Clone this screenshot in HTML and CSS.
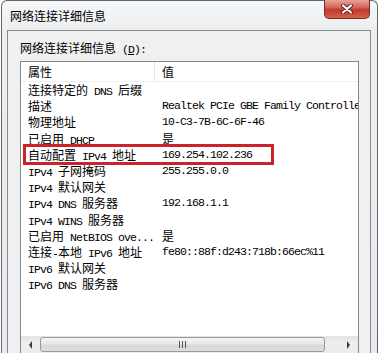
FILE: index.html
```html
<!DOCTYPE html>
<html lang="zh-CN">
<head>
<meta charset="utf-8">
<title>网络连接详细信息</title>
<link rel="stylesheet" href="styles.css">
</head>
<body>
<div class="window">
  <div class="titlebar">
    <span class="title">网络连接详细信息</span>
    <div class="close">
      <svg width="14" height="10" viewBox="0 0 14 10">
        <path d="M3 1.5 L11 8.5 M11 1.5 L3 8.5" stroke="#5a1d18" stroke-width="4" stroke-linecap="round"/>
        <path d="M3 1.5 L11 8.5 M11 1.5 L3 8.5" stroke="#ffffff" stroke-width="2.2" stroke-linecap="round"/>
      </svg>
    </div>
  </div>
  <div class="client">
    <div class="label">网络连接详细信息<span class="m"> (<u>D</u>):</span></div>
    <div class="listbox">
      <div class="header">
        <div class="hcell first">属性</div>
        <div class="hcell">值</div>
      </div>
      <div class="rows">
        <div class="row"><div class="c1">连接特定的<span class="m"> DNS </span>后缀</div><div class="c2"></div></div>
        <div class="row"><div class="c1">描述</div><div class="c2 m">Realtek PCIe GBE Family Controller</div></div>
        <div class="row"><div class="c1">物理地址</div><div class="c2 m">10-C3-7B-6C-6F-46</div></div>
        <div class="row"><div class="c1">已启用<span class="m"> DHCP</span></div><div class="c2">是</div></div>
        <div class="row hl"><div class="c1">自动配置<span class="m"> IPv4 </span>地址</div><div class="c2 m">169.254.102.236</div></div>
        <div class="row"><div class="c1"><span class="m">IPv4 </span>子网掩码</div><div class="c2 m">255.255.0.0</div></div>
        <div class="row"><div class="c1"><span class="m">IPv4 </span>默认网关</div><div class="c2"></div></div>
        <div class="row"><div class="c1"><span class="m">IPv4 DNS </span>服务器</div><div class="c2 m">192.168.1.1</div></div>
        <div class="row"><div class="c1"><span class="m">IPv4 WINS </span>服务器</div><div class="c2"></div></div>
        <div class="row"><div class="c1">已启用<span class="m"> NetBIOS ove...</span></div><div class="c2">是</div></div>
        <div class="row"><div class="c1">连接<span class="m">-</span>本地<span class="m"> IPv6 </span>地址</div><div class="c2 m">fe80::88f:d243:718b:66ec%11</div></div>
        <div class="row"><div class="c1"><span class="m">IPv6 </span>默认网关</div><div class="c2"></div></div>
        <div class="row"><div class="c1"><span class="m">IPv6 DNS </span>服务器</div><div class="c2"></div></div>
      </div>
      <div class="hscroll">
        <div class="sbtn"><span class="arrow-left"></span></div>
        <div class="thumb">
          <svg width="8" height="7" viewBox="0 0 8 7">
            <rect x="0" y="0" width="1" height="7" fill="#555"/>
            <rect x="3" y="0" width="1" height="7" fill="#555"/>
            <rect x="6" y="0" width="1" height="7" fill="#555"/>
          </svg>
        </div>
        <div class="track"></div>
        <div class="sbtn"><span class="arrow-right"></span></div>
      </div>
    </div>
  </div>
</div>
</body>
</html>
```

FILE: styles.css
```css
html, body {
  margin: 0;
  padding: 0;
}

body {
  width: 378px;
  height: 353px;
  overflow: hidden;
  background: #ffffff;
  font-family: "Noto Sans CJK SC", sans-serif;
  font-size: 12px;
  color: #000000;
}

.m {
  font-family: "Liberation Mono", monospace;
  font-size: 11.5px;
  letter-spacing: -0.9px;
}

.window {
  margin-left: 1px;
  width: 377px;
  height: 370px;
  box-sizing: border-box;
  border: 1px solid #5f666f;
  border-bottom: none;
  border-radius: 6px 6px 0 0;
  background: linear-gradient(#f6f7f8, #eceef0 30px, #e8eaed);
  display: flex;
  flex-direction: column;
}

.titlebar {
  flex: none;
  height: 29px;
  display: flex;
  align-items: center;
  padding: 0 7px 0 8px;
}

.title {
  line-height: 14px;
}

.close {
  margin-left: auto;
  align-self: flex-start;
  margin-top: -1px;
  width: 46px;
  height: 19px;
  box-sizing: border-box;
  border: 1px solid #7e2b23;
  border-top: none;
  border-radius: 0 0 5px 5px;
  background: linear-gradient(#e7a497, #d3665a 40%, #c2392c 55%, #d4614e);
  display: flex;
  align-items: center;
  justify-content: center;
}

.close svg {
  display: block;
}

.client {
  flex: 1;
  margin: 0 6px 0 5px;
  border: 1px solid #86898d;
  border-bottom: none;
  background: #f0f0f0;
  padding: 10px 11px 0 12px;
  display: flex;
  flex-direction: column;
}

.label {
  line-height: 14px;
  height: 14px;
  margin-bottom: 6px;
  white-space: nowrap;
}

.listbox {
  width: 339px;
  box-sizing: border-box;
  border: 1px solid #828790;
  background: #ffffff;
  overflow: hidden;
}

.header {
  display: grid;
  grid-template-columns: 134px 1fr;
  height: 19px;
  border-bottom: 1px solid #eceff3;
}

.hcell {
  line-height: 19px;
  padding-left: 7px;
}

.hcell.first {
  border-right: 1px solid #e3e5e8;
}

.rows {
  height: 254px;
  overflow: hidden;
}

.row {
  position: relative;
  display: grid;
  grid-template-columns: 134px 1fr;
  height: 16.2px;
  line-height: 16.2px;
  white-space: nowrap;
}

.c1, .c2 {
  padding-left: 7px;
  overflow: hidden;
}

.hl::after {
  content: "";
  position: absolute;
  left: 2px;
  top: -3px;
  width: 251px;
  height: 21px;
  box-sizing: border-box;
  border: 3px solid #cc2229;
}

.hscroll {
  height: 17px;
  display: flex;
  background: linear-gradient(#e3e3e3, #eeeeee 40%, #ececec);
}

.sbtn {
  width: 19px;
  flex: none;
  display: flex;
  align-items: center;
  justify-content: center;
}

.arrow-left {
  width: 0;
  height: 0;
  border-top: 4px solid transparent;
  border-bottom: 4px solid transparent;
  border-right: 3px solid #3a3a3a;
}

.arrow-right {
  width: 0;
  height: 0;
  border-top: 4px solid transparent;
  border-bottom: 4px solid transparent;
  border-left: 3px solid #3a3a3a;
}

.thumb {
  width: 285px;
  flex: none;
  margin: 1px 0;
  box-sizing: border-box;
  border: 1px solid #9a9a9a;
  border-radius: 3px;
  background: linear-gradient(#f4f4f4, #e8e8e8 45%, #d8d8d8 55%, #dedede);
  display: flex;
  align-items: center;
  justify-content: center;
}

.thumb svg {
  display: block;
}

.track {
  flex: 1;
}
```
